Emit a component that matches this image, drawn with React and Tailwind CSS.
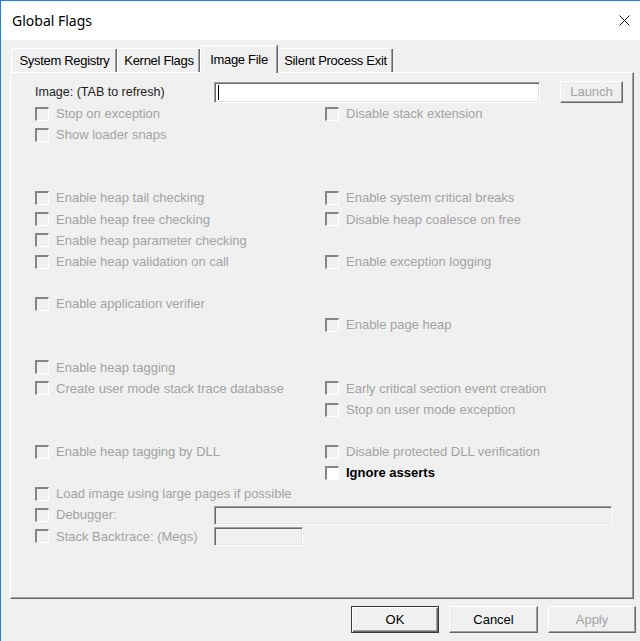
import React from "react";

const rows = [
    ["Stop on exception", "Disable stack extension"],
    ["Show loader snaps", null],
    [null, null],
    [null, null],
    ["Enable heap tail checking", "Enable system critical breaks"],
    ["Enable heap free checking", "Disable heap coalesce on free"],
    ["Enable heap parameter checking", null],
    ["Enable heap validation on call", "Enable exception logging"],
    [null, null],
    ["Enable application verifier", null],
    [null, "Enable page heap"],
    [null, null],
    ["Enable heap tagging", null],
    ["Create user mode stack trace database", "Early critical section event creation"],
    [null, "Stop on user mode exception"],
    [null, null],
    ["Enable heap tagging by DLL", "Disable protected DLL verification"],
    [null, "Ignore asserts"],
    ["Load image using large pages if possible", null],
];

const tabs = [
    { label: "System Registry", w: "w-[106px]" },
    { label: "Kernel Flags", w: "w-[83px]" },
    { label: "Image File", w: "w-[77px]", active: true },
    { label: "Silent Process Exit", w: "w-[116px]" },
];

function Box({ enabled }) {
    return (
        <span
            className={`block h-[14px] w-[14px] shrink-0 border-t-2 border-l-2 border-b border-r border-t-[#858585] border-l-[#858585] border-b-white border-r-white ${
                enabled ? "bg-white" : "bg-[#f0f0f0]"
            }`}
        />
    );
}

function Check({ label }) {
    const enabled = label === "Ignore asserts";
    return (
        <div className="flex items-center">
            <Box enabled={enabled} />
            <span className={`ml-[7px] whitespace-nowrap ${enabled ? "font-bold text-black" : "text-[#a3a3a3]"}`}>
                {label}
            </span>
        </div>
    );
}

function Sunken({ className, white }) {
    return (
        <div
            className={`border border-t-[#a0a0a0] border-l-[#a0a0a0] border-b-white border-r-white shadow-[inset_1px_1px_0_#696969,inset_-1px_-1px_0_#e3e3e3] ${
                white ? "bg-white" : "bg-[#f0f0f0]"
            } ${className}`}
        />
    );
}

export default function App() {
    return (
        <div className="flex h-[641px] w-[640px] flex-col border-l border-t border-[#1883d7] bg-[#f0f0f0] font-['Liberation_Sans',Arial,sans-serif] text-[13px]">
            {/* Title bar */}
            <div className="flex h-[39px] items-center justify-between bg-white pl-[11px] pr-[10px]">
                <span className="font-['Noto_Sans',sans-serif] text-[14px] text-black">Global Flags</span>
                <svg width="11" height="11" viewBox="0 0 11 11">
                    <path d="M0.5 0.5 L10.5 10.5 M10.5 0.5 L0.5 10.5" stroke="#111" strokeWidth="1" />
                </svg>
            </div>

            {/* Tabs */}
            <div className="flex h-[32px] items-end pl-[10px]">
                {tabs.map((t) =>
                    t.active ? (
                        <div
                            key={t.label}
                            className={`relative z-10 -mb-px flex h-[28px] ${t.w} items-center justify-center border-l border-t border-white border-r-0 bg-[#f0f0f0] tracking-[-0.3px] text-black shadow-[inset_-1px_0_0_#a0a0a0,1px_0_0_#696969]`}
                        >
                            {t.label}
                        </div>
                    ) : (
                        <div
                            key={t.label}
                            className={`flex h-[24px] ${t.w} items-center justify-center border-l border-t border-white tracking-[-0.3px] text-black shadow-[inset_-1px_0_0_#696969,inset_-2px_0_0_#a0a0a0]`}
                        >
                            {t.label}
                        </div>
                    )
                )}
            </div>

            {/* Panel */}
            <div className="ml-[9px] h-[527px] w-[624px] border border-t-white border-l-white border-b-[#696969] border-r-[#696969] pl-[24px] shadow-[inset_-1px_-1px_0_#a0a0a0]">
                <div className="mt-[8px] flex h-[22px] items-center">
                    <span className="w-[179px] text-[12.5px] text-[#222]">Image: (TAB to refresh)</span>
                    <div className="relative">
                        <Sunken white className="h-[21px] w-[326px]" />
                        <span className="absolute left-[4px] top-[3px] h-[15px] w-px bg-black" />
                    </div>
                    <div className="ml-[20px] flex h-[22px] w-[63px] items-center justify-center border border-t-white border-l-white border-b-[#696969] border-r-[#696969] text-[#a3a3a3] shadow-[inset_-1px_-1px_0_#a0a0a0]">
                        Launch
                    </div>
                </div>

                {rows.map(([left, right], i) => (
                    <div key={i} className="grid h-[21.15px] grid-cols-[290px_1fr] items-center">
                        <div>{left && <Check label={left} />}</div>
                        <div>{right && <Check label={right} />}</div>
                    </div>
                ))}

                <div className="flex h-[21.15px] items-center">
                    <div className="flex w-[179px] items-center">
                        <Box />
                        <span className="ml-[7px] text-[#a3a3a3]">Debugger:</span>
                    </div>
                    <Sunken className="h-[19px] w-[398px]" />
                </div>
                <div className="flex h-[21.15px] items-center">
                    <div className="flex w-[179px] items-center">
                        <Box />
                        <span className="ml-[7px] whitespace-nowrap text-[#a3a3a3]">Stack Backtrace: (Megs)</span>
                    </div>
                    <Sunken className="h-[19px] w-[89px]" />
                </div>
            </div>

            {/* Buttons */}
            <div className="mt-[7px] flex justify-end gap-[10px] pr-[4px]">
                <div className="flex h-[27px] w-[88px] items-center justify-center border border-[#3a3a3a] text-black shadow-[inset_1px_1px_0_#fff,inset_-1px_-1px_0_#696969,inset_-2px_-2px_0_#a0a0a0]">
                    OK
                </div>
                <div className="flex h-[27px] w-[89px] items-center justify-center border border-t-white border-l-white border-b-[#696969] border-r-[#696969] text-black shadow-[inset_-1px_-1px_0_#a0a0a0]">
                    Cancel
                </div>
                <div className="flex h-[27px] w-[88px] items-center justify-center border border-t-white border-l-white border-b-[#696969] border-r-[#696969] text-[#a3a3a3] shadow-[inset_-1px_-1px_0_#a0a0a0]">
                    Apply
                </div>
            </div>
        </div>
    );
}
